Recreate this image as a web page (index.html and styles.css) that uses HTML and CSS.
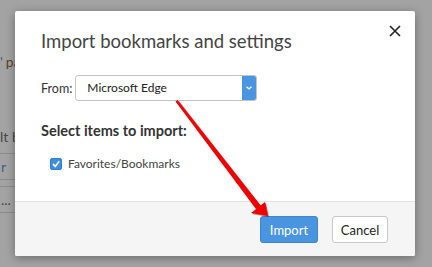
FILE: index.html
```html
<!DOCTYPE html>
<html lang="en">
<head>
  <meta charset="UTF-8" />
  <title>Import bookmarks and settings</title>
  <link rel="stylesheet" href="styles.css">
</head>
<body>

  <!-- page behind the dialog, dimmed -->
  <div class="page">
    <div class="frag frag-top"><span class="link">'</span><span class="warm">pa</span></div>
    <div class="frag frag-mid">lt b</div>
    <div class="frag-box"><span class="link">r</span></div>
    <div class="frag-box">...</div>
  </div>

  <div class="dialog">
    <div class="dialog-body">
      <div class="dialog-head">
        <h1>Import bookmarks and settings</h1>
        <button class="close" aria-label="Close">
          <svg width="12" height="12" viewBox="0 0 12 12">
            <path d="M1 1 L11 11 M11 1 L1 11" stroke="#222" stroke-width="1.6" fill="none"/>
          </svg>
        </button>
      </div>

      <div class="from-row">
        <span class="from-label">From:</span>
        <div class="select">
          <span class="select-value">Microsoft Edge</span>
          <span class="select-arrow">
            <svg width="6" height="4" viewBox="0 0 6 4">
              <path d="M0.5 0.8 L3 3 L5.5 0.8" stroke="#fff" stroke-width="1.3" fill="none"/>
            </svg>
          </span>
        </div>
      </div>

      <h2>Select items to import:</h2>

      <label class="check">
        <span class="box">
          <svg width="10" height="10" viewBox="0 0 10 10">
            <path d="M2 5.2 L4.2 7.4 L8.2 2.2" stroke="#fff" stroke-width="1.7" fill="none"/>
          </svg>
        </span>
        Favorites/Bookmarks
      </label>
    </div>

    <div class="dialog-foot">
      <button class="btn btn-primary">Import</button>
      <button class="btn btn-cancel">Cancel</button>
    </div>
  </div>

  <!-- red annotation arrow -->
  <svg class="arrow" width="432" height="267" viewBox="0 0 432 267">
    <polygon points="176,101 178,100 261,206 256,209" fill="#8a0000" opacity="0.5" transform="translate(1,1)"/>
    <polygon points="175.5,101.5 177.5,100 261,206 256,209" fill="#f20000"/>
    <polygon points="268,216 251,213 265,202" fill="#8a0000" opacity="0.5" transform="translate(1,1)"/>
    <polygon points="268,216 251,213 265,202" fill="#f20000"/>
  </svg>

</body>
</html>
```

FILE: styles.css
```css
:root {
  --blue: #4a95df;
  --text: #333;
  --line: #c4c4c4;
  --foot: #f5f5f5;
}

body {
  margin: 0;
  width: 432px;
  height: 267px;
  overflow: hidden;
  background-color: #a3a3a3;
  font-family: 'Lato', 'Open Sans', sans-serif;
  color: var(--text);
  position: relative;
}

/* ---------- dimmed page ---------- */

.page {
  width: 60px;
  padding-top: 52px;
  font-size: 14px;
  color: #474747;
}

.frag {
  height: 20px;
  line-height: 20px;
  padding-left: 0;
}

.frag-top .link {
  margin-right: 3px;
}

.frag-mid {
  margin-top: 55px;
  padding-left: 0;
}

.link {
  color: #3d5d8c;
}

.warm {
  color: #5a4526;
}

.frag-box {
  height: 25px;
  line-height: 25px;
  border-top: 1px solid #8c8c8c;
  border-bottom: 1px solid #8c8c8c;
  padding-left: 1px;
  margin-top: 6px;
}

.frag-box + .frag-box {
  margin-top: 6px;
}

/* ---------- dialog ---------- */

.dialog {
  position: absolute;
  left: 15px;
  top: 11px;
  width: 400px;
  height: 245px;
  background: #fff;
  border-radius: 2px;
  box-shadow: 0 2px 10px rgba(0, 0, 0, 0.35);
  display: flex;
  flex-direction: column;
}

.dialog-body {
  flex: 1;
  padding: 14px 14px 0 26px;
}

.dialog-head {
  display: flex;
  justify-content: space-between;
  align-items: flex-start;
}

.dialog-head h1 {
  margin: 4px 0 0;
  font-size: 18.5px;
  line-height: 24px;
  font-weight: normal;
  color: #444;
}

.close {
  width: 12px;
  height: 12px;
  padding: 0;
  border: none;
  background: none;
  display: flex;
}

.from-row {
  display: flex;
  align-items: center;
  margin-top: 22px;
}

.from-label {
  font-size: 12.5px;
  margin-right: 3px;
}

.select {
  width: 182px;
  height: 26px;
  box-sizing: border-box;
  border: 1px solid var(--line);
  border-radius: 3px;
  display: flex;
  align-items: stretch;
  overflow: hidden;
}

.select-value {
  flex: 1;
  padding-left: 11px;
  font-size: 12px;
  line-height: 24px;
  color: #222;
}

.select-arrow {
  width: 14px;
  background: var(--blue);
  display: flex;
  align-items: center;
  justify-content: center;
}

h2 {
  margin: 21px 0 0;
  font-size: 14.5px;
  line-height: 18px;
  font-weight: bold;
  color: #333;
}

.check {
  display: flex;
  align-items: center;
  margin: 16px 0 0 9px;
  font-size: 12px;
  color: #444;
}

.box {
  width: 12px;
  height: 12px;
  box-sizing: border-box;
  border-radius: 2px;
  background: #3d8fe0;
  border: 1px solid #2f7fcf;
  display: flex;
  align-items: center;
  justify-content: center;
  margin-right: 6px;
}

.dialog-foot {
  height: 55px;
  box-sizing: border-box;
  background: var(--foot);
  border-top: 1px solid #e2e2e2;
  border-radius: 0 0 2px 2px;
  display: flex;
  justify-content: flex-end;
  align-items: flex-start;
  gap: 14px;
  padding: 14px 27px 0 0;
}

.btn {
  height: 27px;
  padding: 0;
  font-family: 'Lato', 'Open Sans', sans-serif;
  font-size: 13px;
  color: #222;
  background: #fff;
  border: 1px solid #c8c8c8;
  border-radius: 3px;
}

.btn-primary {
  width: 58px;
  background: var(--blue);
  border-color: #3f86cf;
  color: #fff;
}

.btn-cancel {
  width: 56px;
}

.arrow {
  position: absolute;
  left: 0;
  top: 0;
  pointer-events: none;
}
```
